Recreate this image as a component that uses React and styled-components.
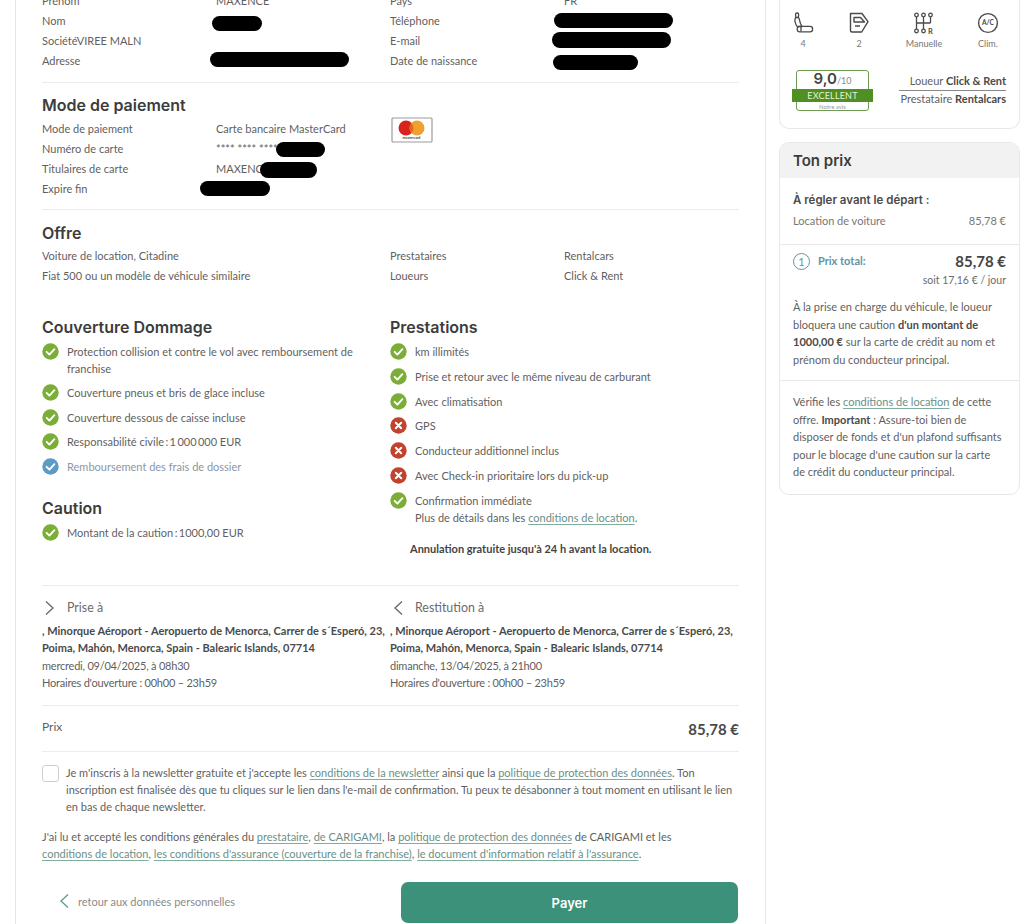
import React from "react";
import styled, { createGlobalStyle } from "styled-components";

const GlobalStyle = createGlobalStyle`
  html, body {
    margin: 0;
    padding: 0;
    height: 924px;
    overflow: hidden;
    background: #fff;
  }
  body {
    font-family: Lato, "Liberation Sans", sans-serif;
    font-size: 11px;
    color: #5f5f5f;
  }
`;

const headingFont = `Inter, Lato, sans-serif`;

const Page = styled.div`
  position: relative;
  width: 1024px;
  height: 924px;
  overflow: hidden;
  display: flex;
  align-items: flex-start;
  gap: 13px;
  padding-left: 15px;
  box-sizing: border-box;
`;

const MainCard = styled.main`
  width: 751px;
  box-sizing: border-box;
  margin-top: -9px;
  padding: 0 26px 40px;
  border-left: 1px solid #e6e6e6;
  border-right: 1px solid #e6e6e6;
`;

const Side = styled.aside`
  width: 241px;
  display: flex;
  flex-direction: column;
  gap: 13px;
`;

const InfoGrid = styled.div`
  display: grid;
  grid-template-columns: repeat(4, 174px);
  grid-auto-rows: 20px;
  line-height: 20px;
`;

const Cell = styled.div`
  white-space: nowrap;
`;

const Divider = styled.div`
  height: 1px;
  background: #ececec;
  margin: ${(p) => p.$margin || "0"};
`;

const Title = styled.h2`
  margin: ${(p) => p.$margin || "0"};
  font-family: ${headingFont};
  font-size: 16px;
  line-height: 22px;
  font-weight: 600;
  color: #3c3c3c;
`;

const Columns = styled.div`
  display: grid;
  grid-template-columns: 348px 348px;
  margin-top: ${(p) => p.$top || 0}px;
`;

const Checks = styled.ul`
  list-style: none;
  margin: 5px 0 0;
  padding: 0;
  display: flex;
  flex-direction: column;
  gap: ${(p) => p.$gap || 7.8}px;
`;

const Check = styled.li`
  display: flex;
  gap: 8px;
  line-height: 17px;
  color: ${(p) => (p.$muted ? "#8a97a8" : "#5f5f5f")};
  padding-right: 30px;
`;

const Mark = styled.svg`
  width: 17px;
  height: 17px;
  flex: none;
`;

const TextLink = styled.a`
  color: #6b8f86;
  text-decoration: underline;
  text-decoration-color: #7fae9f;
  text-underline-offset: 2px;
`;

const Strong = styled.strong`
  font-weight: 700;
  color: #4a4a4a;
`;

const FreeCancel = styled.p`
  margin: 14px 0 0 20px;
  line-height: 17px;
  font-weight: 700;
  color: #444;
`;

const PlaceHead = styled.div`
  display: flex;
  align-items: center;
  height: 20px;
  font-size: 12.4px;
  color: #6c6c6c;
`;

const Chevron = styled.svg`
  width: 12px;
  height: 16px;
  flex: none;
  margin: 0 ${(p) => p.$after || 11}px 0 ${(p) => p.$before || 2}px;
  color: ${(p) => p.$color || "#666"};
`;

const PlaceText = styled.div`
  margin-top: 4px;
  line-height: 17.4px;
  white-space: nowrap;
`;

const PlaceMeta = styled.span`
  letter-spacing: -0.22px;
`;

const PriceRow = styled.div`
  display: flex;
  justify-content: space-between;
  align-items: center;
  height: 45px;
`;

const PriceLabel = styled.span`
  font-size: 12px;
  padding-bottom: 5px;
`;

const PriceValue = styled.span`
  font-size: 15px;
  font-weight: 700;
  color: #4a4a4a;
  padding-top: 1px;
`;

const Newsletter = styled.div`
  display: flex;
  gap: 7px;
  margin-top: 13px;
  line-height: 16.6px;
`;

const Box = styled.span`
  width: 15px;
  height: 15px;
  flex: none;
  border: 1px solid #cfcfcf;
  border-radius: 3px;
  background: #fff;
`;

const Legal = styled.p`
  margin: 13px 0 0;
  line-height: 17px;
  white-space: nowrap;
`;

const Actions = styled.div`
  display: grid;
  grid-template-columns: 359px 337px;
  align-items: center;
  margin-top: 20px;
`;

const BackLink = styled.a`
  display: flex;
  align-items: center;
  padding: 0 0 3px 15px;
  color: #8a8a8a;
`;

const PayButton = styled.button`
  height: 41px;
  border: 0;
  border-radius: 7px;
  background: #3b9179;
  color: #fff;
  font-family: ${headingFont};
  font-size: 13px;
  font-weight: 600;
`;

const CarCard = styled.section`
  height: 129px;
  box-sizing: border-box;
  border: 1px solid #e8e8e8;
  border-top: 0;
  border-radius: 0 0 10px 10px;
  padding: 12px 13px 0 12px;
`;

const Specs = styled.div`
  display: grid;
  grid-template-columns: 40px 72px 58px 70px;
  margin: 0 -14px 0 -9px;
  text-align: center;
  font-size: 9px;
  color: #777;
`;

const Spec = styled.div`
  display: flex;
  flex-direction: column;
  align-items: center;
  gap: 4px;
  line-height: 12px;
`;

const SpecIcon = styled.svg`
  width: 22px;
  height: 22px;
  color: #4a4a4a;
`;

const CarFoot = styled.div`
  display: flex;
  justify-content: space-between;
  margin-top: 20px;
`;

const Badge = styled.div`
  width: 73px;
  height: 41px;
  box-sizing: border-box;
  margin-left: 4px;
  border: 1px solid #6f9c55;
  border-radius: 3px;
  text-align: center;
`;

const Score = styled.div`
  font-family: ${headingFont};
  font-size: 15px;
  line-height: 16px;
  font-weight: 600;
  color: #444;
  small {
    font-family: Lato, sans-serif;
    font-size: 9px;
    font-weight: 400;
    color: #888;
  }
`;

const BadgeBand = styled.div`
  margin: 0 -5px;
  height: 13px;
  line-height: 13px;
  background: #4f8f23;
  color: #e8f2d8;
  font-size: 9px;
  letter-spacing: 0.2px;
`;

const BadgeNote = styled.div`
  font-size: 6px;
  line-height: 10px;
  color: #999;
`;

const Vendors = styled.div`
  width: 107px;
  text-align: right;
  line-height: 18px;
  white-space: nowrap;
  padding-top: 2px;
`;

const VendorLine = styled.div`
  border-bottom: ${(p) => (p.$lined ? "1px solid #888" : "0")};
  margin-top: ${(p) => (p.$lined ? 0 : -1)}px;
`;

const PriceCard = styled.section`
  height: 353px;
  box-sizing: border-box;
  border: 1px solid #e8e8e8;
  border-radius: 10px;
  overflow: hidden;
`;

const PriceHead = styled.div`
  height: 35px;
  line-height: 35px;
  padding-left: 13px;
  background: #f2f2f2;
  font-family: ${headingFont};
  font-size: 15px;
  font-weight: 600;
  color: #3c3c3c;
`;

const PriceSection = styled.div`
  padding: ${(p) => p.$padding || "0 13px"};
  border-top: ${(p) => (p.$lined ? "1px solid #e8e8e8" : "0")};
`;

const SubTitle = styled.div`
  font-family: ${headingFont};
  font-size: 11.5px;
  line-height: 18px;
  font-weight: 600;
  color: #4a4a4a;
`;

const SplitRow = styled.div`
  display: flex;
  justify-content: space-between;
  align-items: center;
  margin-top: ${(p) => p.$top || 0}px;
  line-height: 18px;
  color: #777;
`;

const TotalLabel = styled.span`
  display: flex;
  align-items: center;
  gap: 8px;
  font-weight: 700;
  color: #5f95a6;
`;

const TotalIcon = styled.span`
  width: 15px;
  height: 15px;
  border: 1px solid #5f95a6;
  border-radius: 50%;
  text-align: center;
  line-height: 15px;
  font-weight: 400;
`;

const TotalValue = styled.span`
  font-size: 15px;
  font-weight: 700;
  color: #444;
`;

const PerDay = styled.div`
  margin-top: 1px;
  text-align: right;
  font-size: 10.5px;
  line-height: 18px;
  color: #6c6c6c;
`;

const Note = styled.p`
  margin: ${(p) => p.$margin || "0"};
  line-height: 17.5px;
  white-space: nowrap;
`;

const Redaction = styled.span`
  position: absolute;
  left: ${(p) => p.$x}px;
  top: ${(p) => p.$y}px;
  width: ${(p) => p.$w}px;
  height: ${(p) => p.$h}px;
  border-radius: 8px;
  background: #000;
`;

function CheckMark({ kind = "ok" }) {
  const fill = { ok: "#7bae37", blue: "#5b9bc4", no: "#c1432d" }[kind];
  return (
    <Mark viewBox="0 0 17 17">
      <circle cx="8.5" cy="8.5" r="8.2" fill={fill} />
      {kind === "no" ? (
        <path d="M5.8 5.8l5.4 5.4M11.2 5.8l-5.4 5.4" stroke="#fff" strokeWidth="2" strokeLinecap="round" />
      ) : (
        <path d="M4.6 8.8l2.8 2.8 5-5.4" fill="none" stroke="#fff" strokeWidth="1.9" strokeLinecap="round" strokeLinejoin="round" />
      )}
    </Mark>
  );
}

function ChevronIcon({ left, ...rest }) {
  return (
    <Chevron viewBox="0 0 12 16" {...rest}>
      <path d={left ? "M10 1.5L3 8l7 6.5" : "M2 1.5L9 8l-7 6.5"} fill="none" stroke="currentColor" strokeWidth="1.3" />
    </Chevron>
  );
}

function SeatIcon() {
  return (
    <SpecIcon viewBox="0 0 22 22" fill="none" stroke="currentColor" strokeWidth="1.3" strokeLinejoin="round">
      <rect x="3.6" y="1" width="3" height="4.4" rx="1.4" />
      <path d="M3.4 5.6h3.4l1.6 5.6 1.6 3.3H6c-1 0-1.5-.5-1.8-1.4L2.8 9z" />
      <rect x="5.2" y="14.4" width="15.4" height="5.4" rx="2.6" />
      <path d="M9 14.6v5" />
    </SpecIcon>
  );
}

function DoorIcon() {
  return (
    <SpecIcon viewBox="0 0 22 22" fill="none" stroke="currentColor" strokeWidth="1.4" strokeLinejoin="round">
      <path d="M2.5 1.5h11.5l6 8.2-6.3 10.3H4c-.9 0-1.5-.6-1.5-1.5z" />
      <path d="M6 5.5h6.5l4 4.5H6zM7 14h5" />
    </SpecIcon>
  );
}

function GearIcon() {
  return (
    <SpecIcon viewBox="0 0 22 22" fill="none" stroke="currentColor" strokeWidth="1.3">
      <circle cx="3.5" cy="3" r="1.8" />
      <circle cx="10.5" cy="3" r="1.8" />
      <circle cx="17.5" cy="3" r="1.8" />
      <circle cx="3.5" cy="19" r="1.8" />
      <circle cx="10.5" cy="19" r="1.8" />
      <path d="M3.5 5v12M10.5 5v12M17.5 5v6M3.5 11h14" />
      <text x="15" y="21.5" fontSize="7.5" fontWeight="700" fill="currentColor" stroke="none" fontFamily="Lato, sans-serif">R</text>
    </SpecIcon>
  );
}

function AcIcon() {
  return (
    <SpecIcon viewBox="0 0 22 22">
      <circle cx="11" cy="11" r="9.4" fill="none" stroke="currentColor" strokeWidth="1.4" />
      <text x="11" y="13.4" textAnchor="middle" fontSize="6.6" fontWeight="700" fill="currentColor" fontFamily="Lato, sans-serif">A/C</text>
    </SpecIcon>
  );
}

const CardLogo = styled.svg`
  width: 42px;
  height: 26px;
  margin: -2px 0 0 1px;
`;

function MasterCardLogo() {
  return (
    <CardLogo viewBox="0 0 42 26">
      <rect x="1" y="1" width="40" height="24" rx="1" fill="#fff" stroke="#9c9c9c" strokeWidth="1.2" />
      <circle cx="15" cy="11" r="7.5" fill="#d8231f" />
      <circle cx="26" cy="11" r="7.5" fill="#eda12f" />
      <path d="M20.5 5.9a7.5 7.5 0 0 1 0 10.2a7.5 7.5 0 0 1 0-10.2z" fill="#e8641f" />
      <text x="20.5" y="22" textAnchor="middle" fontSize="3.6" fontWeight="700" fill="#444" fontFamily="Lato, sans-serif">mastercard</text>
    </CardLogo>
  );
}

function Place({ title, left, date }) {
  return (
    <div>
      <PlaceHead>
        <ChevronIcon left={left} />
        {title}
      </PlaceHead>
      <PlaceText>
        <Strong>
          , Minorque Aéroport - Aeropuerto de Menorca, Carrer de s´Esperó, 23,
          <br />
          Poima, Mahón, Menorca, Spain - Balearic Islands, 07714
        </Strong>
        <br />
        <PlaceMeta>
          {date}
          <br />
          Horaires d'ouverture : 00h00 – 23h59
        </PlaceMeta>
      </PlaceText>
    </div>
  );
}

export default function App() {
  return (
    <Page>
      <GlobalStyle />
      <MainCard>
        <InfoGrid>
          <Cell>Prénom</Cell>
          <Cell>MAXENCE</Cell>
          <Cell>Pays</Cell>
          <Cell>FR</Cell>
          <Cell>Nom</Cell>
          <Cell />
          <Cell>Téléphone</Cell>
          <Cell />
          <Cell>SociétéVIREE MALN</Cell>
          <Cell />
          <Cell>E-mail</Cell>
          <Cell />
          <Cell>Adresse</Cell>
          <Cell />
          <Cell>Date de naissance</Cell>
          <Cell />
        </InfoGrid>
        <Divider $margin="11px 0 0" />

        <Title $margin="11px 0 3px">Mode de paiement</Title>
        <InfoGrid>
          <Cell>Mode de paiement</Cell>
          <Cell>Carte bancaire MasterCard</Cell>
          <Cell><MasterCardLogo /></Cell>
          <Cell />
          <Cell>Numéro de carte</Cell>
          <Cell>**** **** ****</Cell>
          <Cell />
          <Cell />
          <Cell>Titulaires de carte</Cell>
          <Cell>MAXENCE</Cell>
          <Cell />
          <Cell />
          <Cell>Expire fin</Cell>
          <Cell />
          <Cell />
          <Cell />
        </InfoGrid>
        <Divider $margin="10px 0 0" />

        <Title $margin="12px 0 2px">Offre</Title>
        <InfoGrid>
          <Cell>Voiture de location, Citadine</Cell>
          <Cell />
          <Cell>Prestataires</Cell>
          <Cell>Rentalcars</Cell>
          <Cell>Fiat 500 ou un modèle de véhicule similaire</Cell>
          <Cell />
          <Cell>Loueurs</Cell>
          <Cell>Click &amp; Rent</Cell>
        </InfoGrid>

        <Columns $top={30}>
          <div>
            <Title>Couverture Dommage</Title>
            <Checks $gap={7.4}>
              <Check><CheckMark /><span>Protection collision et contre le vol avec remboursement de franchise</span></Check>
              <Check><CheckMark /><span>Couverture pneus et bris de glace incluse</span></Check>
              <Check><CheckMark /><span>Couverture dessous de caisse incluse</span></Check>
              <Check><CheckMark /><span>Responsabilité civile{"\u2009:\u2009"}1{"\u2009"}000{"\u2009"}000 EUR</span></Check>
              <Check $muted><CheckMark kind="blue" /><span>Remboursement des frais de dossier</span></Check>
            </Checks>
            <Title $margin="22px 0 0">Caution</Title>
            <Checks>
              <Check><CheckMark /><span>Montant de la caution{"\u2009:\u2009"}1000,00 EUR</span></Check>
            </Checks>
          </div>
          <div>
            <Title>Prestations</Title>
            <Checks>
              <Check><CheckMark /><span>km illimités</span></Check>
              <Check><CheckMark /><span>Prise et retour avec le même niveau de carburant</span></Check>
              <Check><CheckMark /><span>Avec climatisation</span></Check>
              <Check><CheckMark kind="no" /><span>GPS</span></Check>
              <Check><CheckMark kind="no" /><span>Conducteur additionnel inclus</span></Check>
              <Check><CheckMark kind="no" /><span>Avec Check-in prioritaire lors du pick-up</span></Check>
              <Check>
                <CheckMark />
                <span>
                  Confirmation immédiate
                  <br />
                  Plus de détails dans les <TextLink>conditions de location</TextLink>.
                </span>
              </Check>
            </Checks>
            <FreeCancel>Annulation gratuite jusqu'à 24 h avant la location.</FreeCancel>
          </div>
        </Columns>
        <Divider $margin="28px 0 12px" />

        <Columns>
          <Place title="Prise à" date="mercredi, 09/04/2025, à 08h30" />
          <Place title="Restitution à" left date="dimanche, 13/04/2025, à 21h00" />
        </Columns>
        <Divider $margin="14px 0 0" />

        <PriceRow>
          <PriceLabel>Prix</PriceLabel>
          <PriceValue>85,78 €</PriceValue>
        </PriceRow>
        <Divider />

        <Newsletter>
          <Box />
          <span>
            Je m'inscris à la newsletter gratuite et j'accepte les <TextLink>conditions de la newsletter</TextLink> ainsi que la <TextLink>politique de protection des données</TextLink>. Ton inscription est finalisée dès que tu cliques sur le lien dans l'e-mail de confirmation. Tu peux te désabonner à tout moment en utilisant le lien en bas de chaque newsletter.
          </span>
        </Newsletter>
        <Legal>
          J'ai lu et accepté les conditions générales du <TextLink>prestataire</TextLink>, <TextLink>de CARIGAMI</TextLink>, la <TextLink>politique de protection des données</TextLink> de CARIGAMI et les
          <br />
          <TextLink>conditions de location</TextLink>, <TextLink>les conditions d'assurance (couverture de la franchise)</TextLink>, <TextLink>le document d'information relatif à l'assurance</TextLink>.
        </Legal>
        <Actions>
          <BackLink>
            <ChevronIcon left $before={1} $after={8} $color="#5f9c8c" />
            retour aux données personnelles
          </BackLink>
          <PayButton>Payer</PayButton>
        </Actions>
      </MainCard>

      <Side>
        <CarCard>
          <Specs>
            <Spec><SeatIcon />4</Spec>
            <Spec><DoorIcon />2</Spec>
            <Spec><GearIcon />Manuelle</Spec>
            <Spec><AcIcon />Clim.</Spec>
          </Specs>
          <CarFoot>
            <Badge>
              <Score>9,0<small>/10</small></Score>
              <BadgeBand>EXCELLENT</BadgeBand>
              <BadgeNote>Notre avis</BadgeNote>
            </Badge>
            <Vendors>
              <VendorLine $lined>Loueur <Strong>Click &amp; Rent</Strong></VendorLine>
              <VendorLine>Prestataire <Strong>Rentalcars</Strong></VendorLine>
            </Vendors>
          </CarFoot>
        </CarCard>

        <PriceCard>
          <PriceHead>Ton prix</PriceHead>
          <PriceSection $padding="13px 13px 14px">
            <SubTitle>À régler avant le départ :</SubTitle>
            <SplitRow $top={3}><span>Location de voiture</span><span>85,78 €</span></SplitRow>
          </PriceSection>
          <PriceSection $lined $padding="7px 13px 0">
            <SplitRow>
              <TotalLabel><TotalIcon>1</TotalIcon>Prix total:</TotalLabel>
              <TotalValue>85,78 €</TotalValue>
            </SplitRow>
            <PerDay>soit 17,16 € / jour</PerDay>
            <Note $margin="9px 0 12px">
              À la prise en charge du véhicule, le loueur
              <br />
              bloquera une caution <Strong>d'un montant de</Strong>
              <br />
              <Strong>1000,00 €</Strong> sur la carte de crédit au nom et
              <br />
              prénom du conducteur principal.
            </Note>
          </PriceSection>
          <PriceSection $lined>
            <Note $margin="12px 0 0">
              Vérifie les <TextLink>conditions de location</TextLink> de cette
              <br />
              offre. <Strong>Important</Strong> : Assure-toi bien de
              <br />
              disposer de fonds et d'un plafond suffisants
              <br />
              pour le blocage d'une caution sur la carte
              <br />
              de crédit du conducteur principal.
            </Note>
          </PriceSection>
        </PriceCard>
      </Side>

      <Redaction $x={212} $y={16} $w={50} $h={15} />
      <Redaction $x={210} $y={52} $w={139} $h={15} />
      <Redaction $x={554} $y={13} $w={119} $h={15} />
      <Redaction $x={552} $y={32} $w={119} $h={16} />
      <Redaction $x={553} $y={55} $w={85} $h={15} />
      <Redaction $x={276} $y={142} $w={49} $h={15} />
      <Redaction $x={260} $y={162} $w={57} $h={16} />
      <Redaction $x={200} $y={181} $w={70} $h={15} />
    </Page>
  );
}
